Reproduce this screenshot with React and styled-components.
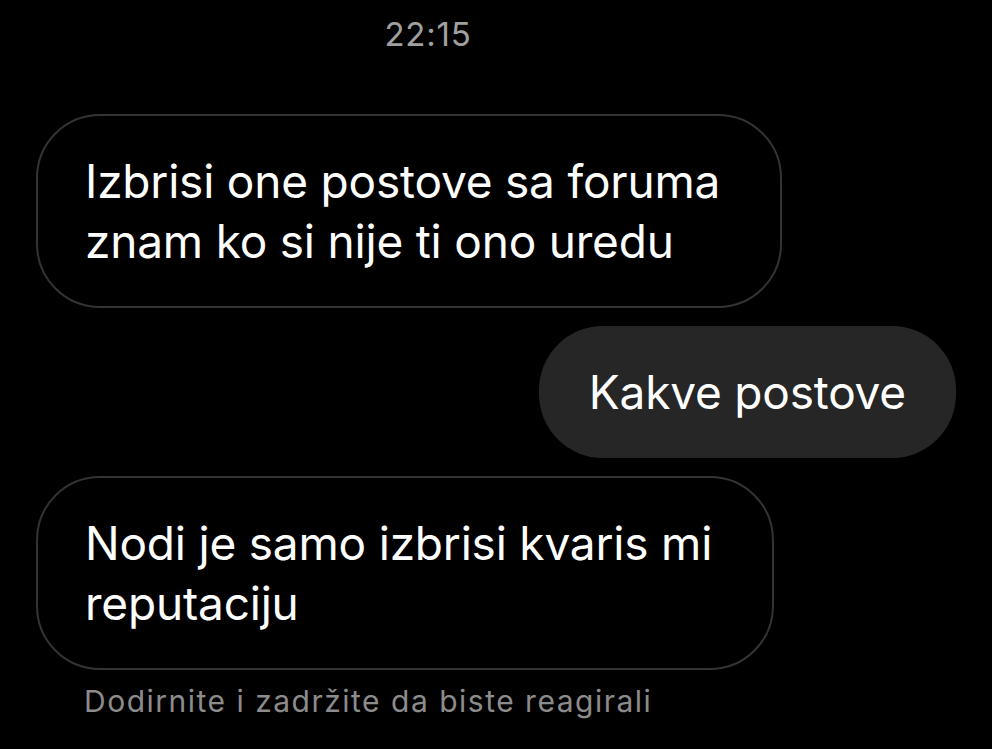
import React from "react";
import styled, { createGlobalStyle } from "styled-components";

const Global = createGlobalStyle`
  html, body { margin: 0; padding: 0; background: #000; }
  body { font-family: Inter, "Noto Sans", sans-serif; -webkit-font-smoothing: antialiased; }
`;

const Screen = styled.div`
  width: 992px;
  height: 749px;
  background: #000;
  box-sizing: border-box;
  padding: 12px 36px 0 36px;
  display: flex;
  flex-direction: column;
  overflow: hidden;
`;

const TimeRow = styled.div`
  width: 784px;
  display: flex;
  justify-content: center;
  color: #a0a0a0;
  font-size: 33px;
  line-height: 44px;
  letter-spacing: 0.8px;
  margin-bottom: 58px;
`;

const Row = styled.div`
  display: flex;
  justify-content: ${(p) => (p.$mine ? "flex-end" : "flex-start")};
  margin-bottom: ${(p) => p.$gap}px;
`;

const Bubble = styled.div`
  box-sizing: border-box;
  border-radius: 64px;
  padding: ${(p) => (p.$mine ? "36px 50px" : "35px 60px 35px 47px")};
  border: ${(p) => (p.$mine ? "none" : "2px solid #333333")};
  background: ${(p) => (p.$mine ? "#262626" : "#000")};
  color: #fff;
  font-size: 46px;
  line-height: 60px;
  white-space: pre-line;
  letter-spacing: -0.2px;
`;

const Caption = styled.div`
  color: #8c8c8c;
  font-size: 30px;
  line-height: 36px;
  letter-spacing: 1.5px;
  padding-left: 48px;
  margin-top: 13px;
`;

export default function App() {
  return (
    <>
      <Global />
      <Screen>
        <TimeRow>22:15</TimeRow>
        <Row $gap={18}>
          <Bubble>{"Izbrisi one postove sa foruma\nznam ko si nije ti ono uredu"}</Bubble>
        </Row>
        <Row $mine $gap={18}>
          <Bubble $mine>Kakve postove</Bubble>
        </Row>
        <Row $gap={0}>
          <Bubble>{"Nodi je samo izbrisi kvaris mi\nreputaciju"}</Bubble>
        </Row>
        <Caption>Dodirnite i zadržite da biste reagirali</Caption>
      </Screen>
    </>
  );
}
